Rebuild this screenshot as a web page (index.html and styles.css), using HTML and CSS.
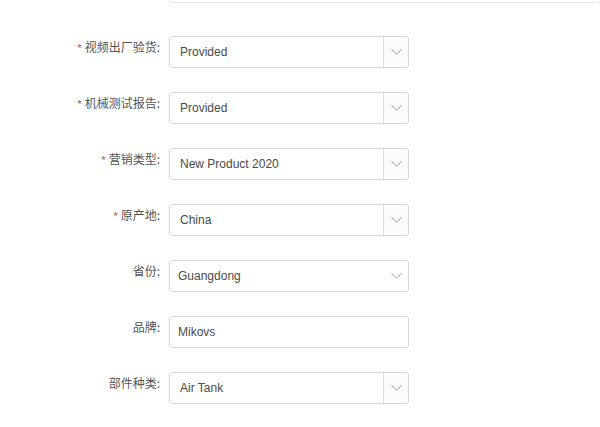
FILE: index.html
```html
<!DOCTYPE html>
<html>
<head>
<meta charset="utf-8">
<link rel="stylesheet" href="styles.css">
</head>
<body>
<div class="form">
  <div class="row row-top">
    <div class="label"></div>
    <div class="field wide"></div>
  </div>
  <div class="row">
    <div class="label"><span class="req">*</span>视频出厂验货:</div>
    <div class="field select divided"><span class="val">Provided</span><span class="arrow"><svg width="11" height="6" viewBox="0 0 11 6"><path d="M0.5 0.5 L5.5 5 L10.5 0.5" fill="none" stroke="#9a9a9a" stroke-width="1"/></svg></span></div>
  </div>
  <div class="row">
    <div class="label"><span class="req">*</span>机械测试报告:</div>
    <div class="field select divided"><span class="val">Provided</span><span class="arrow"><svg width="11" height="6" viewBox="0 0 11 6"><path d="M0.5 0.5 L5.5 5 L10.5 0.5" fill="none" stroke="#9a9a9a" stroke-width="1"/></svg></span></div>
  </div>
  <div class="row">
    <div class="label"><span class="req">*</span>营销类型:</div>
    <div class="field select divided"><span class="val">New Product 2020</span><span class="arrow"><svg width="11" height="6" viewBox="0 0 11 6"><path d="M0.5 0.5 L5.5 5 L10.5 0.5" fill="none" stroke="#9a9a9a" stroke-width="1"/></svg></span></div>
  </div>
  <div class="row">
    <div class="label"><span class="req">*</span>原产地:</div>
    <div class="field select divided"><span class="val">China</span><span class="arrow"><svg width="11" height="6" viewBox="0 0 11 6"><path d="M0.5 0.5 L5.5 5 L10.5 0.5" fill="none" stroke="#9a9a9a" stroke-width="1"/></svg></span></div>
  </div>
  <div class="row">
    <div class="label">省份:</div>
    <div class="field select plain"><span class="val">Guangdong</span><span class="arrow"><svg width="11" height="6" viewBox="0 0 11 6"><path d="M0.5 0.5 L5.5 5 L10.5 0.5" fill="none" stroke="#9a9a9a" stroke-width="1"/></svg></span></div>
  </div>
  <div class="row">
    <div class="label">品牌:</div>
    <div class="field text"><span class="val">Mikovs</span></div>
  </div>
  <div class="row">
    <div class="label">部件种类:</div>
    <div class="field select divided"><span class="val">Air Tank</span><span class="arrow"><svg width="11" height="6" viewBox="0 0 11 6"><path d="M0.5 0.5 L5.5 5 L10.5 0.5" fill="none" stroke="#9a9a9a" stroke-width="1"/></svg></span></div>
  </div>
</div>
</body>
</html>
```
FILE: styles.css
```css
html, body {
  margin: 0;
  padding: 0;
  background: #fff;
  overflow: hidden;
}
body {
  width: 600px;
  height: 427px;
  font-family: "Liberation Sans", Arial, "Noto Sans CJK SC", sans-serif;
  font-size: 12px;
  color: #444;
}
.form {
  display: flex;
  flex-direction: column;
  gap: 24px;
  margin-top: -29px;
}
.row {
  display: flex;
  align-items: flex-start;
}
.row-top {
  margin-bottom: 9px;
}
.label {
  flex: none;
  width: 169px;
  box-sizing: border-box;
  text-align: right;
  padding-top: 3px;
  padding-right: 9px;
  line-height: 16px;
  color: #555;
  font-family: "Noto Sans CJK SC", "Liberation Sans", sans-serif;
}
.req {
  color: #e4393c;
  margin-right: 3px;
  font-family: "Liberation Sans", sans-serif;
  font-size: 11px;
}
.field {
  box-sizing: border-box;
  width: 240px;
  height: 32px;
  border: 1px solid #d6d6d6;
  border-radius: 3px;
  display: flex;
  align-items: stretch;
  background: #fff;
}
.field.wide {
  width: 470px;
  border-color: #e6e6e6;
}
.val {
  flex: 1;
  display: flex;
  align-items: center;
  padding-left: 10px;
  color: #4a4a4a;
}
.plain .val,
.text .val {
  padding-left: 8px;
}
.arrow {
  width: 24px;
  flex: none;
  display: flex;
  align-items: center;
  justify-content: center;
}
.divided .arrow {
  border-left: 1px solid #dcdcdc;
  background: #fbfbfb;
  border-radius: 0 3px 3px 0;
}
```
